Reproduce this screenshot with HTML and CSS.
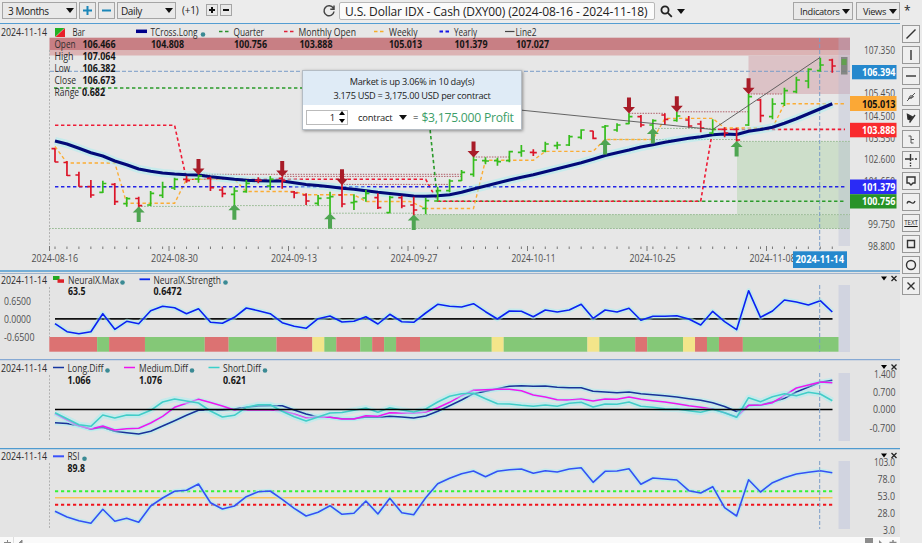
FILE: index.html
```html
<!DOCTYPE html>
<html lang="en">
<head>
    <meta charset="UTF-8">
    <meta name="viewport" content="width=device-width, initial-scale=1.0">
    <title>U.S. Dollar IDX - Cash (DXY00)</title>
    <link rel="stylesheet" href="styles.css">
</head>
<body>
    <div class="app">
        <div class="left">
            <header class="toolbar">
                <button class="select months">3 Months <i class="caret"></i></button>
                <button class="step"><svg width="11" height="11"><path d="M5.5 1v9M1 5.5h9"/></svg></button>
                <button class="step"><svg width="11" height="11"><path d="M1 5.5h9"/></svg></button>
                <button class="select daily">Daily <i class="caret"></i></button>
                <span class="offset">(+1)</span>
                <button class="mini"><svg width="8" height="8"><path d="M4 1v6M1 4h6"/></svg></button>
                <button class="mini"><svg width="8" height="8"><path d="M1 4h6"/></svg></button>
                <svg class="reload" width="14" height="14"><path d="M11.3 4.2A5 5 0 1 0 12 7.5M12 1.5v3.7H8.3"/></svg>
                <div class="symbol"><span>U.S. Dollar IDX - Cash (DXY00) (2024-08-16 - 2024-11-18)</span></div>
                <svg class="search" width="13" height="13"><circle cx="5" cy="5" r="3.6"/><path d="M7.8 7.8l4 4"/></svg>
                <i class="caret search-caret"></i>
                <button class="select indicators">Indicators <i class="caret"></i></button>
                <button class="select views">Views <i class="caret"></i></button>
            </header>

            <div class="main-panel">
                <svg class="panel price" viewBox="0 24 900 246" width="900" height="246">
                    <!-- resistance and support zones -->
                    <rect x="49.5" y="37.7" width="800.5" height="12.8" fill="#c87f84"/>
                    <rect x="49.5" y="50.5" width="800.5" height="5" fill="#dcb3b4"/>
                    <rect x="748.5" y="55.5" width="101.5" height="38.5" fill="#dcc2c6"/>
                    <rect x="414" y="214.5" width="436" height="14" fill="#c2d8bd"/>
                    <rect x="737" y="141.5" width="113" height="73" fill="#cddeca"/>
                    <rect x="838.5" y="38" width="11.5" height="208" fill="#b4b9d4" opacity=".35"/>

                    <g class="levels-red">
                        <path d="M198 174.3H461M282 176.4H461M341 184.4H450M473 157H510M629 113.3H665M677 111.8H748M748 94H782"/>
                    </g>
                    <g class="levels-green">
                        <path d="M138 206.4H235M234 205.6H330M330 213.2H414M414 214.6H850M49 228.5H850M605 139.5H737M737 141.4H850M652 128.4H712"/>
                    </g>
                    <path class="axis" d="M49.5 50V250"/>
                    <path class="cross" d="M50 71.3H850M819.7 38V250"/>

                    <path class="dash quarter" d="M54 88H425.7L437.6 201.2H845"/>
                    <path class="dash monthly" d="M55 125.3H174.6L186.5 179.3H425.7L437.6 201.2H700.7L712.7 129.4H845"/>
                    <path class="dash weekly" d="M55 146.5L67 163H114.8L126.7 203.3H174.6L186.5 179.3H234.4L246.3 191.5H294.2L306.1 194.8H354L366 201.5H410L425.7 208.5H473.5L485.5 160.3H533.3L545.3 151.4H593L605 139.5H652.9L664.9 118.4H712.7L724.6 128H772.5L784.4 103.8H845"/>
                    <path class="dash yearly" d="M55 186.8H845"/>
                    <g id="price-lines"></g>
                    <g id="bars"></g>
                    <path class="line2" d="M425.7 100.5L712.7 129.5L820 57.5"/>
                    <g id="arrows"></g>
                    <rect x="841" y="57" width="6.5" height="17.5" fill="#777d77" opacity=".85"/>
                    <rect x="841.5" y="59" width="5" height="6" fill="#62a04f"/>

                    <!-- legend -->
                    <g class="txt">
                        <text x="1" y="35.6" textLength="46">2024-11-14</text>
                        <path d="M55 28h9.5l-9.5 9z" fill="#22b022"/><path d="M65 28v9h-9.5z" fill="#e8202a"/>
                        <text x="72.5" y="35.6" textLength="12.5">Bar</text>
                        <path d="M136 31.3h11" stroke="#00008b" stroke-width="3.5"/>
                        <text x="150.5" y="35.6" textLength="47">TCross.Long</text>
                        <circle cx="203" cy="34.5" r="2.3" class="dot"/>
                        <path d="M219 31.5h10" stroke="#2a912a" stroke-width="1.6" stroke-dasharray="3.5 2.5"/>
                        <text x="233.5" y="35.6" textLength="30.5">Quarter</text>
                        <path d="M284 31.5h10" stroke="#e02038" stroke-width="1.6" stroke-dasharray="3.5 2.5"/>
                        <text x="298.5" y="35.6" textLength="57.5">Monthly Open</text>
                        <path d="M374 31.5h10" stroke="#f5ac2a" stroke-width="1.6" stroke-dasharray="3.5 2.5"/>
                        <text x="389" y="35.6" textLength="28.5">Weekly</text>
                        <path d="M439.5 31.5h10" stroke="#1515e8" stroke-width="1.8" stroke-dasharray="3.5 2.5"/>
                        <text x="454" y="35.6" textLength="23">Yearly</text>
                        <path d="M505 31.5h9.5" stroke="#444" stroke-width="1.2"/>
                        <text x="515.5" y="35.6" textLength="21">Line2</text>
                        <text x="54.5" y="48.2" textLength="21">Open</text>
                        <text x="54.5" y="60.3" textLength="19">High</text>
                        <text x="54.5" y="72.3" textLength="15.5">Low</text>
                        <text x="54.5" y="84.4" textLength="21.5">Close</text>
                        <text x="54.5" y="96.4" textLength="24.5">Range</text>
                    </g>
                    <g class="txt bold">
                        <text x="82.5" y="48.2" textLength="33">106.466</text>
                        <text x="82.5" y="60.3" textLength="33">107.064</text>
                        <text x="82.5" y="72.3" textLength="33">106.382</text>
                        <text x="82.5" y="84.4" textLength="33">106.673</text>
                        <text x="82" y="96.4" textLength="23">0.682</text>
                        <text x="151" y="48" textLength="33">104.808</text>
                        <text x="234" y="48" textLength="33">100.756</text>
                        <text x="299.5" y="48" textLength="33">103.888</text>
                        <text x="389" y="48" textLength="33">105.013</text>
                        <text x="454.5" y="48" textLength="33">101.379</text>
                        <text x="516" y="48" textLength="33">107.027</text>
                    </g>

                    <!-- price scale -->
                    <g class="txt scale">
                        <text x="864" y="54.3" textLength="31">107.350</text>
                        <text x="864" y="97" textLength="31">105.450</text>
                        <text x="864" y="119.5" textLength="31">104.500</text>
                        <text x="864" y="141.5" textLength="31">103.550</text>
                        <text x="864" y="163" textLength="31">102.600</text>
                        <text x="864" y="184.5" textLength="31">101.650</text>
                        <text x="868" y="228.4" textLength="27">99.750</text>
                        <text x="868" y="250" textLength="27">98.800</text>
                    </g>
                    <g class="txt bold badge">
                        <rect x="852" y="65" width="44.5" height="14.3" fill="#2588cd"/>
                        <text x="862" y="76" textLength="33.5">106.394</text>
                        <rect x="850" y="96" width="46.5" height="15" fill="#fba836"/>
                        <text class="dark" x="862" y="107.5" textLength="33.5">105.013</text>
                        <rect x="850" y="122.8" width="46.5" height="14.5" fill="#f92a2d"/>
                        <text x="862" y="133.8" textLength="33.5">103.888</text>
                        <rect x="850" y="179.5" width="46.5" height="14.7" fill="#2a2bf6"/>
                        <text x="862" y="191" textLength="33.5">101.379</text>
                        <rect x="850" y="194.2" width="46.5" height="14.3" fill="#279327"/>
                        <text x="862" y="205.3" textLength="33.5">100.756</text>
                    </g>

                    <!-- dates -->
                    <g id="ticks"></g>
                    <g class="txt scale">
                        <text x="31.5" y="262" textLength="46.5">2024-08-16</text>
                        <text x="151" y="262" textLength="47">2024-08-30</text>
                        <text x="271" y="262" textLength="46">2024-09-13</text>
                        <text x="390.5" y="262" textLength="47">2024-09-27</text>
                        <text x="511.5" y="262" textLength="44">2024-10-11</text>
                        <text x="629.5" y="262" textLength="46">2024-10-25</text>
                        <text x="749.5" y="262" textLength="46">2024-11-08</text>
                    </g>
                    <rect x="793" y="251.3" width="54" height="16.7" fill="#2588cd"/>
                    <g class="txt bold badge"><text x="795.5" y="262.8" textLength="48.5">2024-11-14</text></g>
                </svg>

                <div class="popup">
                    <div class="popup-head">
                        <div>Market is up 3.06% in 10 day(s)</div>
                        <div>3.175 USD = 3,175.00 USD per contract</div>
                    </div>
                    <div class="popup-body">
                        <div class="spin"><span>1</span><svg width="8" height="14"><path d="M4 1l3 4H1zM4 13l3-4H1z"/></svg></div>
                        <span class="unit">contract</span><i class="caret"></i>
                        <span class="equals">=</span><span class="profit">$3,175.000 Profit</span>
                    </div>
                </div>
            </div>

            <svg class="panel neural" viewBox="0 270 900 89" width="900" height="89">
                <path d="M0 271h900" stroke="#74add5" stroke-width="2"/>
                <path d="M0 273.5h900" stroke="#9fb3cc"/>
                <rect x="838.5" y="285" width="11.5" height="67" class="future"/>
                <path class="axis" d="M49.5 287V337"/>
                <g id="strip"></g>
                <path d="M55 318.8H832.5" stroke="#111" stroke-width="1.7"/>
                <g id="neural-lines"></g>
                <path class="cross" d="M819.7 285V352"/>
                <g class="txt">
                    <text x="1" y="283.6" textLength="46">2024-11-14</text>
                    <path d="M53 276h6.5v4h-6.5z" fill="#22a822"/><path d="M57.5 279.3h6.5v3.5h-6.5z" fill="#dd2028"/>
                    <text x="68" y="283.6" textLength="51">NeuralX.Max</text>
                    <circle cx="122.5" cy="282.5" r="2.3" class="dot"/>
                    <path d="M139.5 279.3h10.5" stroke="#0a28ee" stroke-width="1.8"/>
                    <text x="153.5" y="283.6" textLength="67.5">NeuralX.Strength</text>
                    <circle cx="225.5" cy="282.5" r="2.3" class="dot"/>
                </g>
                <g class="txt bold">
                    <text x="68" y="295" textLength="17.5">63.5</text>
                    <text x="153.5" y="295" textLength="28">0.6472</text>
                </g>
                <g class="txt scale">
                    <text x="4" y="304.7" textLength="27">0.6500</text>
                    <text x="4" y="322.7" textLength="27">0.0000</text>
                    <text x="4" y="340.7" textLength="30.5">-0.6500</text>
                </g>
                <path d="M881 276.5h6l-3 4z"/><path class="close" d="M891.5 276l5 5M896.5 276l-5 5"/>
            </svg>

            <svg class="panel diff" viewBox="0 359 900 89" width="900" height="89">
                <path d="M0 359.5h900" stroke="#86a9d4" stroke-width="1.3"/>
                <rect x="838.5" y="373" width="11.5" height="68" class="future"/>
                <path class="axis" d="M49.5 375V441"/>
                <g id="diff-lines"></g>
                <path d="M55 409.5H832.5" stroke="#000" stroke-width="1.7"/>
                <path class="cross" d="M819.7 373V441"/>
                <g class="txt">
                    <text x="1" y="371.6" textLength="46">2024-11-14</text>
                    <path d="M53 367.5h11" stroke="#1636a0" stroke-width="1.5"/>
                    <text x="67.5" y="371.6" textLength="36">Long.Diff</text>
                    <circle cx="107.5" cy="370.5" r="2.3" class="dot"/>
                    <path d="M124 367.5h11" stroke="#ee14ee" stroke-width="1.5"/>
                    <text x="139" y="371.6" textLength="49">Medium.Diff</text>
                    <circle cx="192" cy="370.5" r="2.3" class="dot"/>
                    <path d="M208.5 367.5h11" stroke="#3bd0cb" stroke-width="1.5"/>
                    <text x="223" y="371.6" textLength="38">Short.Diff</text>
                    <circle cx="265" cy="370.5" r="2.3" class="dot"/>
                </g>
                <g class="txt bold">
                    <text x="67.5" y="383.5" textLength="23">1.066</text>
                    <text x="139" y="383.5" textLength="23">1.076</text>
                    <text x="223" y="383.5" textLength="23">0.621</text>
                </g>
                <g class="txt scale">
                    <text x="874" y="377.7" textLength="21.5">1.400</text>
                    <text x="873" y="395.7" textLength="22.5">0.700</text>
                    <text x="873" y="413.2" textLength="22.5">0.000</text>
                    <text x="869.5" y="432.2" textLength="26">-0.700</text>
                </g>
                <path d="M881 365h6l-3 4z"/><path class="close" d="M891.5 364.5l5 5M896.5 364.5l-5 5"/>
            </svg>

            <svg class="panel rsi" viewBox="0 448 900 89" width="900" height="89">
                <path d="M0 448.5h900" stroke="#4f9bd0" stroke-width="1.3"/>
                <rect x="838.5" y="461" width="11.5" height="68" class="future"/>
                <path class="axis" d="M49.5 463V529"/>
                <path d="M55 491.2H832.5" stroke="#35f335" stroke-width="1.9" stroke-dasharray="3.2 2.8"/>
                <path d="M55 497.7H832.5" stroke="#fac45c" stroke-width="1.5"/>
                <path d="M55 504.8H832.5" stroke="#f0141c" stroke-width="1.9" stroke-dasharray="3.2 2.8"/>
                <g id="rsi-lines"></g>
                <path class="cross" d="M819.7 461V529"/>
                <g class="txt">
                    <text x="1" y="460" textLength="46">2024-11-14</text>
                    <path d="M53 456.3h11" stroke="#3a52fb" stroke-width="2"/>
                    <text x="67.5" y="460" textLength="12">RSI</text>
                    <circle cx="84.5" cy="458.8" r="2.3" class="dot"/>
                </g>
                <g class="txt bold"><text x="67.5" y="472" textLength="17.5">89.8</text></g>
                <g class="txt scale">
                    <text x="874" y="466.3" textLength="21">103.0</text>
                    <text x="877.5" y="482.6" textLength="17.5">78.0</text>
                    <text x="877.5" y="499.8" textLength="17.5">53.0</text>
                    <text x="877.5" y="517" textLength="17.5">28.0</text>
                    <text x="883" y="533.5" textLength="12">3.0</text>
                </g>
                <path d="M881 453.5h6l-3 4z"/><path class="close" d="M891.5 453l5 5M896.5 453l-5 5"/>
            </svg>

            <svg class="scrollbar" viewBox="0 537 900 6" width="900" height="6">
                <path d="M13.5 537v6" stroke="#ddd"/>
                <path d="M4 542.5h7M7.5 540v3M22 540l-3 3h3z" stroke="#888" fill="#888"/>
                <rect x="865" y="538" width="8" height="5" fill="#8c8c8c"/>
                <path d="M879 540l3 3h-3z" fill="#888"/><path d="M889.5 542.5h7M893 540v3" stroke="#888" stroke-width="1.5"/>
            </svg>
        </div>

        <aside class="side">
            <div class="star">*</div>
            <div class="tools">
                <button><svg viewBox="0 0 16 16"><path d="M3.5 12.5l9-9"/></svg></button>
                <button><svg viewBox="0 0 16 16"><path d="M8 3v10"/></svg></button>
                <button><svg viewBox="0 0 16 16"><path d="M3 8h10"/></svg></button>
                <button><svg viewBox="0 0 16 16" class="thin"><path d="M4 12l3-3M9 7l3-3M5 9.5l6-2"/><circle cx="8" cy="8" r="1.3"/></svg></button>
                <button><svg viewBox="0 0 16 16"><path d="M6.5 12.5L12 5"/><path d="M4.500 4.500l5 2.500-2.500 3-2-1z" fill="#222"/></svg></button>
                <button><svg viewBox="0 0 16 16" class="thin"><path d="M5.5 5H8v7h2.5M8 8.5h3"/></svg></button>
                <button><svg viewBox="0 0 16 16"><path d="M2 7h5M8.500 7h2M12 7h2M7.5 2v7M7.5 10.5v1.5M7.5 13v1.5"/></svg></button>
                <button><svg viewBox="0 0 16 16"><path d="M4 4h8v6h-2l-2 2-2-2H4z"/></svg></button>
                <button><svg viewBox="0 0 16 16"><path d="M4 9.5c1-3 2.5-2 4-1s3 1 4-1.5"/></svg></button>
                <button class="text-tool">TEXT</button>
                <button><svg viewBox="0 0 16 16"><path d="M4.5 4.5h7v7h-7z"/></svg></button>
                <button><svg viewBox="0 0 16 16"><circle cx="8" cy="8" r="4.5"/></svg></button>
                <button><svg viewBox="0 0 16 16"><path d="M4.5 4.5l7 7M11.5 4.5l-7 7"/></svg></button>
            </div>
        </aside>
    </div>
    <script src="chart.js"></script>
</body>
</html>
```
FILE: styles.css
```css
* {
    box-sizing: border-box;
}
body, html {
    height: 100%;
    margin: 0;
    overflow: hidden;
    background-color: #ebebeb;
    font-family: "Open Sans", "Noto Sans", sans-serif;
    color: #222;
}
.app {
    display: flex;
    width: 922px;
    height: 543px;
}
.left {
    width: 900px;
}
svg {
    display: block;
}
button {
    margin: 0;
    padding: 0;
    border: 1px solid #a5a5a5;
    background-color: #e9e9e9;
    font-family: inherit;
    color: #222;
}

/* Toolbar */
.toolbar {
    display: flex;
    align-items: flex-start;
    height: 24px;
    padding: 2px 0 0 2px;
    border-bottom: 1px solid #549dd2;
    background-color: #ececec;
}
.toolbar svg {
    fill: none;
    stroke: #222;
}
.select {
    display: flex;
    align-items: center;
    justify-content: space-between;
    height: 17px;
    padding: 0 2px 0 5px;
    font-size: 10px;
    letter-spacing: -0.4px;
}
.caret {
    flex: none;
    border: 4px solid transparent;
    border-top: 5px solid #111;
    border-bottom: 0;
}
.months {
    width: 75px;
}
.step {
    display: flex;
    align-items: center;
    justify-content: center;
    width: 17px;
    height: 17px;
    margin-left: 2px;
}
.toolbar .step svg {
    stroke: #1b86b8;
    stroke-width: 2;
}
.daily {
    width: 59px;
    margin-left: 2px;
    padding-left: 3px;
}
.offset {
    width: 24px;
    margin-left: 6px;
    font-size: 10px;
    line-height: 17px;
    letter-spacing: -0.2px;
}
.mini {
    display: flex;
    align-items: center;
    justify-content: center;
    width: 12px;
    height: 12px;
    margin: 2px 2px 0 0;
}
.toolbar .mini svg {
    stroke: #111;
    stroke-width: 2;
}
.toolbar .reload {
    flex: none;
    margin: 2px 3px 0 88px;
    stroke: #444;
    stroke-width: 1.5;
}
.symbol {
    display: flex;
    align-items: center;
    flex: none;
    width: 316px;
    height: 18px;
    padding-left: 5px;
    border: 1px solid #b8b8b8;
    border-radius: 2px;
    background-color: #fbfbfb;
    font-size: 12px;
    letter-spacing: -0.13px;
    white-space: nowrap;
}
.toolbar .search {
    margin: 3px 0 0 5px;
    stroke-width: 1.8;
}
.search-caret {
    margin: 7px 0 0 4px;
}
.indicators {
    width: 60px;
    margin-left: auto;
    padding-left: 6px;
}
.views {
    width: 44px;
    margin-left: 3px;
    padding-left: 6px;
}
.indicators, .views {
    height: 18px;
    font-size: 9.2px;
    letter-spacing: -0.3px;
}

/* Chart panels */
.main-panel {
    position: relative;
}
.panel {
    background-color: #e4e4e4;
}
.price {
    background-color: #e7e7e7;
}
.txt {
    font-size: 9.9px;
    fill: #2d2d2d;
}
.scale {
    fill: #505050;
}
.bold {
    font-weight: 700;
    fill: #151515;
}
.badge {
    fill: #fff;
}
.dark {
    fill: #111;
}
.dot {
    fill: #3b8a94;
}
.axis {
    stroke: #b2b2b2;
    stroke-dasharray: 2 1.5;
}
.cross {
    fill: none;
    stroke: #7a9dc8;
    stroke-dasharray: 4 2;
}
.future {
    fill: #ccd0df;
    opacity: 0.8;
}
.close {
    stroke: #222;
    stroke-width: 1.3;
}
.levels-red {
    fill: none;
    stroke: #b0606a;
    stroke-dasharray: 1.5 1.2;
}
.levels-green {
    fill: none;
    stroke: #9cbd98;
    stroke-dasharray: 1.8 1.2;
}
.dash {
    fill: none;
    stroke-width: 1.6;
    stroke-dasharray: 3.4 2.6;
}
.quarter {
    stroke: #2a9a2a;
}
.monthly {
    stroke: #ee1c36;
}
.weekly {
    stroke: #fbad35;
    stroke-width: 1.4;
}
.yearly {
    stroke: #2323e6;
}
.line2 {
    fill: none;
    stroke: #555;
    stroke-width: 0.9;
}
.glow {
    fill: none;
    stroke: #a5eff2;
    stroke-opacity: 0.5;
    stroke-linejoin: round;
}
.line {
    fill: none;
    stroke-linejoin: round;
}
.bar {
    fill: none;
    stroke-width: 1.7;
}
.up {
    stroke: #35bd1c;
}
.down {
    stroke: #dc1428;
}
.arrow-up {
    fill: #4fa552;
}
.arrow-down {
    fill: #a81c28;
}
.tick {
    stroke: #777;
}

/* Profit popup */
.popup {
    position: absolute;
    left: 302px;
    top: 46px;
    width: 220px;
    height: 60px;
    border: 1px solid #b4bcc4;
    background-color: #fff;
    box-shadow: 1px 1px 3px rgba(0, 0, 0, 0.4);
}
.popup-head {
    height: 34px;
    padding-top: 4px;
    background-color: #dfebf6;
    font-size: 9.2px;
    letter-spacing: -0.24px;
    line-height: 13.5px;
    text-align: center;
}
.popup-body {
    display: flex;
    align-items: center;
    height: 24px;
    padding-left: 3px;
    font-size: 9.4px;
}
.spin {
    display: flex;
    align-items: center;
    justify-content: flex-end;
    width: 42px;
    height: 15px;
    padding-right: 1px;
    border: 1px solid #bbb;
}
.spin svg {
    margin-left: 3px;
}
.unit {
    width: 35px;
    margin: 0 6px 0 10px;
    letter-spacing: -0.2px;
}
.equals {
    margin: 0 3px 0 6px;
}
.profit {
    font-size: 12.2px;
    letter-spacing: -0.25px;
    color: #3c9e68;
    white-space: nowrap;
}
.scrollbar {
    background-color: #fafafa;
}

/* Drawing tools */
.side {
    width: 22px;
    padding-left: 2px;
}
.star {
    height: 25px;
    padding-left: 2px;
    font-size: 12px;
    line-height: 21px;
}
.tools {
    display: flex;
    flex-direction: column;
    gap: 3px;
}
.tools button {
    width: 18px;
    height: 18px;
    border-color: #999;
    background-color: #efefef;
}
.tools svg {
    width: 16px;
    height: 16px;
    fill: none;
    stroke: #333;
    stroke-width: 1.4;
}
.tools .thin {
    stroke: #555;
    stroke-width: 1;
}
.tools .text-tool {
    font-size: 6.2px;
    line-height: 8px;
    letter-spacing: -0.1px;
    text-decoration: underline;
}
```
FILE: chart.js
```js
const NS = 'http://www.w3.org/2000/svg';
const START = 55;
const STEP = 11.958;

function add(parent, tag, attrs) {
    const el = document.createElementNS(NS, tag);
    for (const key in attrs) {
        el.setAttribute(key, attrs[key]);
    }
    document.getElementById(parent).appendChild(el);
}

function x(i) {
    return START + i * STEP;
}

function line(parent, ys, color, width, glow) {
    const points = ys.map((y, i) => `${x(i).toFixed(1)},${y}`).join(' ');
    add(parent, 'polyline', { points, class: 'glow', 'stroke-width': glow });
    add(parent, 'polyline', { points, class: 'line', stroke: color, 'stroke-width': width });
}

// top, bottom, open, close, direction
const bars = [
    [148.3,162.3,148.7,162,0],[161,176,162.5,175.5,0],[171.7,186.7,175,186.5,0],[180,197.7,186.7,195,0],
    [180.7,193,192.3,183.5,1],[183,205,184.3,201.7,0],[197,206.7,203.7,198.7,1],[196.7,208,198.5,205.7,0],
    [191,206,205,193.3,1],[181.7,198,195.3,187,1],[177.7,190,188,179.3,1],[175.7,182.7,179.3,180.7,0],
    [174.7,182.7,179,176,1],[176.7,191,178.3,187.7,0],[186.7,197.3,190,193.7,0],[187.3,206.7,194.3,191,1],
    [180,192.7,191.7,183.3,1],[177.3,183.3,180.3,180.3,0],[176,190,186,179.3,1],[176.7,188.7,178.3,180.7,0],
    [191,198.3,192,193,0],[193.3,205,195,201,0],[195,205.7,203.3,198.3,1],[191.7,216,198,196.7,1],
    [184.3,207.3,195,204,0],[194.3,210,202.7,201.7,1],[190,201.7,198,193.3,1],[193.3,209,197.7,207.7,0],
    [195.7,213.3,212.7,197.3,1],[195.7,208.3,197.7,206,0],[196.7,216,205,210,0],[197.7,214.3,208.3,200.7,1],
    [186.7,201.7,201,190.7,1],[179.3,192.3,190.7,181,1],[170,181,180.7,172.3,1],[156,176.7,174.3,160,1],
    [157.3,164.3,160.7,161,1],[157.7,165.7,160.7,161.7,1],[150.7,162.3,160.7,151.7,1],[145,156.7,152.3,151,1],
    [149.3,156,152.3,152.6,0],[141.7,152.3,151,144,1],[141.7,149.3,145.7,145,1],[135,146,145,136.7,1],
    [129.3,139.3,137.3,130,1],[130.7,139.3,131,138.3,0],[125,142,127,126,1],[123.3,131.7,130,125,1],
    [113.3,124.3,123.7,116.7,1],[115,127.3,116.7,125,0],[119.3,135,125,120.7,1],[113.3,125,115,119.3,0],
    [111.7,121.7,120.3,116,1],[116,127.7,120,126,0],[120.7,132.3,124,128,0],[119.3,134.3,133,129.3,1],
    [127.3,137.3,129.3,133,0],[127.7,141.7,129.3,140,0],[94,126,125,96.7,1],[98.7,122.3,100,115.7,0],
    [98.3,119.3,116.7,104,1],[87.7,106,103.5,90.7,1],[76.7,93.3,91.7,80,1],[68.3,88.3,81,69.3,1],
    [57.7,71.7,70.7,65,1],[58.7,72.7,60,66,0]
];

const average = [
    141,144,148.3,152.7,156,161,164.7,169,171.3,173,174,174.7,175,176.7,178,179.3,180.3,180.7,181,181,182.7,184.5,
    185.5,186.7,188.3,189.3,190.7,192.3,193.5,194.7,196,196.3,195.7,194.7,192.3,189,186,183,180,177.3,174.7,171.7,168.7,165.7,
    162.7,159.2,155.5,152.7,150,147,144.7,142.3,140.3,138.3,136.7,134.7,134,134.5,131.2,129.5,127.3,123.3,118.7,113.7,108.7,103.7
];

const neural = [
    323.7,331.7,333.7,331.7,313.7,329.3,321.3,323.7,310.7,306.3,307.7,313.7,308.7,322.3,323.3,317.3,308,310.7,313.7,322.7,326.3,328.3,
    318.7,316,322,321.3,316.7,324,314.3,321.7,322.3,313,304.3,306.3,307,303.7,311.7,319,311,311.3,316.7,310,312,310,
    304.3,318.3,310,312,308.3,320.3,316.3,316.3,315.7,319,325,311.3,321.7,329.7,290.7,317.3,311,300,302,305,300.7,312
];

const longDiff = [
    422.7,423.5,425.7,429,427.3,431.3,432.7,434,431.3,426,420.7,415.3,410.3,410,409.7,409,407.3,406,405.7,405.7,410,414,
    417,417.3,418.7,418.7,417,417.3,416.3,417,418,416,411.3,405.7,400,393.7,391.3,388.7,386.3,385.7,386.3,386,387.3,387.7,
    387.7,391.3,392,392.7,392,393.7,394.7,395.7,397,398.7,400.3,402.7,406.5,411.5,405.5,405,402,398.3,392,387,382.3,380.3
];

const mediumDiff = [
    413.7,420,425.7,429,426,430,428.7,428.3,423,416.3,407.3,403.3,399.2,402.5,406,410,410,410,410,410.7,414,418,
    417,417.3,419,419,415.7,416.3,412.7,413,413.3,412,407.7,402.3,395.7,390.3,389.7,389.3,389.3,390.7,395,397,399.7,400,
    399,401,399,399.3,397,399.3,400.7,402,403.7,405.7,407.3,409,412.7,417,405.3,405,402.7,395.3,388,385,382,382.7
];

const shortDiff = [
    412.7,418.7,424.7,426.3,415,418,415,415.3,410.3,402,399,401,403,411,417,415.3,407.3,404.7,404.7,411.3,416.7,421,
    417,413,412.5,410.3,408,412.3,407.7,410,412,409,402,396.3,393.7,393.3,398.7,403.7,404,405.3,406.3,405,406.3,403.3,
    402.3,407,404,404.3,402,406.3,407.3,408.7,409,410.7,412.3,409.3,412.7,417.3,397.7,401.7,396.7,393.7,395.7,392.3,394,400.7
];

const rsi = [
    511.3,517,520.7,523.3,509.3,521.3,518.3,522.3,506,498,491.3,490.3,484,502.7,509,506,496.7,491.7,491,499.3,508.3,516,
    512.3,505.7,514.3,513.3,501,514,498.3,512.7,514.7,497.7,483.7,478.3,473.7,471,476.7,471.3,469.7,469,473.3,470.7,472,469,
    467.7,482.3,471.3,471,468.7,484.3,478,479,480,490.7,493,486.7,507.7,516,479.7,492,482.7,477.7,474,472.3,470.7,472.7
];

line('price-lines', average, '#020a78', 3.1, 8);
line('neural-lines', neural, '#0b20f2', 1.6, 5);
line('diff-lines', longDiff, '#1a3299', 1.5, 5);
line('diff-lines', mediumDiff, '#ee18ee', 1.5, 4);
line('diff-lines', shortDiff, '#42cdc8', 1.6, 6);
line('rsi-lines', rsi, '#3550f5', 1.6, 4.5);

bars.forEach(([top, bottom, open, close, up], i) => {
    const px = x(i);
    add('bars', 'path', {
        d: `M${px} ${top}V${bottom}M${px - 3.5} ${open}H${px}M${px} ${close}H${px + 3.5}`,
        class: 'bar ' + (up ? 'up' : 'down')
    });
    add('ticks', 'path', { d: `M${px} 246.5v2.5`, class: 'tick' });
});

for (let i = 0; i < 7; i++) {
    add('ticks', 'path', { d: `M${49.5 + i * 119.5} 246v5`, class: 'tick' });
}

// bar index, y of the tip
[[12, 175], [19, 177], [24, 185.3], [35, 157.5], [48, 113.5], [52, 112.3], [58, 94.3]].forEach(([i, y]) => {
    add('arrows', 'path', { d: `M${x(i)} ${y}l-6 -6.5h4v-9.5h4v9.5h4z`, class: 'arrow-down' });
});
[[7, 206.5], [15, 204.3], [23, 213.3], [30, 214.5], [46, 139], [50, 128], [57, 141]].forEach(([i, y]) => {
    add('arrows', 'path', { d: `M${x(i)} ${y}l-6 6h4v9.5h4v-9.5h4z`, class: 'arrow-up' });
});

// signal strip: colour and number of bars
const colors = { r: '#dc7272', g: '#84c877', y: '#f3e58a' };
let pos = 49.3;
'r4 g1 r3 g5 r2 g4 r3 y1 g1 r2 g1 r1 g1 r2 g6 y1 g7 y1 g3 r1 g3 y1 r1 g1 r2 g8'.split(' ').forEach(part => {
    const width = part[1] * STEP;
    add('strip', 'rect', { x: pos, y: 337, width, height: 14.7, fill: colors[part[0]] });
    pos += width;
});

// keep labels condensed instead of squeezing the gaps between letters
document.querySelectorAll('text').forEach(t => {
    t.setAttribute('lengthAdjust', 'spacingAndGlyphs');
});
```
